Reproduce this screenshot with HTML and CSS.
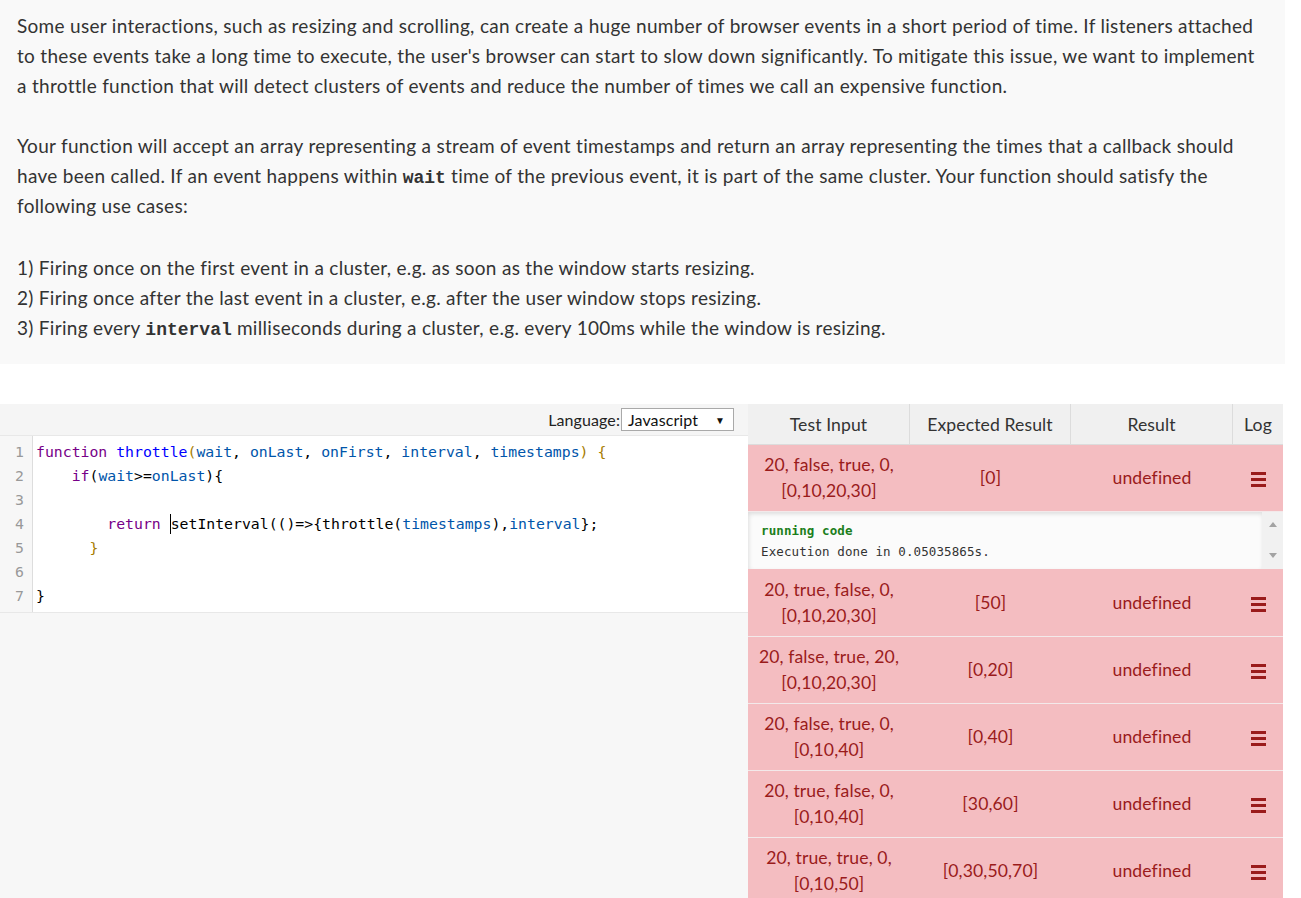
FILE: index.html
```html
<!DOCTYPE html>
<html lang="en">
<head>
<meta charset="utf-8">
<title>Throttle</title>
<link rel="stylesheet" href="styles.css">
</head>
<body>
<section class="problem">
  <p>Some user interactions, such as resizing and scrolling, can create a huge number of browser events in a short period of time. If listeners attached to these events take a long time to execute, the user's browser can start to slow down significantly. To mitigate this issue, we want to implement a throttle function that will detect clusters of events and reduce the number of times we call an expensive function.</p>
  <p>Your function will accept an array representing a stream of event timestamps and return an array representing the times that a callback should have been called. If an event happens within <code>wait</code> time of the previous event, it is part of the same cluster. Your function should satisfy the following use cases:</p>
  <p class="cases">1) Firing once on the first event in a cluster, e.g. as soon as the window starts resizing.<br>2) Firing once after the last event in a cluster, e.g. after the user window stops resizing.<br>3) Firing every <code>interval</code> milliseconds during a cluster, e.g. every 100ms while the window is resizing.</p>
</section>

<main class="workspace">
  <div class="editor-col">
    <div class="editor-bar">
      <span class="lang-label">Language:</span>
      <div class="lang-select"><span>Javascript</span><span class="arrow">▼</span></div>
    </div>
    <div class="code">
      <div class="gutter">
        <div>1</div><div>2</div><div>3</div><div>4</div><div>5</div><div>6</div><div>7</div>
      </div>
      <div class="lines">
        <div class="ln"><span class="kw">function</span> <span class="def">throttle</span><span class="br">(</span><span class="v2">wait</span>, <span class="v2">onLast</span>, <span class="v2">onFirst</span>, <span class="v2">interval</span>, <span class="v2">timestamps</span><span class="br">)</span> <span class="br">{</span></div>
        <div class="ln">    <span class="kw">if</span>(<span class="v2">wait</span>&gt;=<span class="v2">onLast</span>){</div>
        <div class="ln"> </div>
        <div class="ln">        <span class="kw">return</span> <span class="cursor"></span>setInterval(()=&gt;{throttle(<span class="v2">timestamps</span>),<span class="v2">interval</span>};</div>
        <div class="ln">      <span class="br">}</span></div>
        <div class="ln"> </div>
        <div class="ln">}</div>
      </div>
    </div>
  </div>

  <div class="results">
    <div class="thead">
      <div class="c1">Test Input</div>
      <div class="c2">Expected Result</div>
      <div class="c3">Result</div>
      <div class="c4">Log</div>
    </div>

    <div class="row">
      <div class="c1">20, false, true, 0, [0,10,20,30]</div>
      <div class="c2">[0]</div>
      <div class="c3">undefined</div>
      <div class="c4"><span class="menu"><i></i><i></i><i></i></span></div>
    </div>
    <div class="log">
      <div class="log-text">
        <div class="ok">running code</div>
        <div>Execution done in 0.05035865s.</div>
      </div>
      <div class="scroll"><span class="up"></span><span class="down"></span></div>
    </div>
    <div class="row">
      <div class="c1">20, true, false, 0, [0,10,20,30]</div>
      <div class="c2">[50]</div>
      <div class="c3">undefined</div>
      <div class="c4"><span class="menu"><i></i><i></i><i></i></span></div>
    </div>
    <div class="row">
      <div class="c1">20, false, true, 20, [0,10,20,30]</div>
      <div class="c2">[0,20]</div>
      <div class="c3">undefined</div>
      <div class="c4"><span class="menu"><i></i><i></i><i></i></span></div>
    </div>
    <div class="row">
      <div class="c1">20, false, true, 0, [0,10,40]</div>
      <div class="c2">[0,40]</div>
      <div class="c3">undefined</div>
      <div class="c4"><span class="menu"><i></i><i></i><i></i></span></div>
    </div>
    <div class="row">
      <div class="c1">20, true, false, 0, [0,10,40]</div>
      <div class="c2">[30,60]</div>
      <div class="c3">undefined</div>
      <div class="c4"><span class="menu"><i></i><i></i><i></i></span></div>
    </div>
    <div class="row">
      <div class="c1">20, true, true, 0, [0,10,50]</div>
      <div class="c2">[0,30,50,70]</div>
      <div class="c3">undefined</div>
      <div class="c4"><span class="menu"><i></i><i></i><i></i></span></div>
    </div>
  </div>
</main>
</body>
</html>
```
FILE: styles.css
```css
* { box-sizing: border-box; }

html, body {
  margin: 0;
  padding: 0;
  background: #fff;
  font-family: Lato, "Open Sans", sans-serif;
  color: #333;
}

.problem {
  width: 1285px;
  background: #f9f9f9;
  padding: 11px 17px 21px 17px;
  font-size: 19px;
  letter-spacing: 0.3px;
  line-height: 30px;
}

.problem p {
  margin: 0 0 30px 0;
}

.problem p.cases {
  margin: 32px 0 0 0;
}

.problem code {
  font-family: "Liberation Mono", "DejaVu Sans Mono", monospace;
  font-size: 18px;
  line-height: 1;
  letter-spacing: 0;
  font-weight: bold;
  color: #333;
}

.workspace {
  display: flex;
  margin-top: 40px;
  height: 494px;
  overflow: hidden;
}

.editor-col {
  width: 748px;
  background: #f7f7f7;
}

.editor-bar {
  height: 32px;
  background: #f5f5f5;
  border-bottom: 1px solid #e8e8e8;
  display: flex;
  align-items: center;
  justify-content: flex-end;
  padding-right: 14px;
  font-size: 16px;
  letter-spacing: 0.1px;
  color: #222;
}

.lang-label {
  margin-right: 1px;
}

.lang-select {
  width: 113px;
  height: 23px;
  border: 1px solid #a9a9a9;
  background: #fff;
  display: flex;
  align-items: center;
  justify-content: space-between;
  padding: 0 8px 0 6px;
  font-size: 16px;
  color: #111;
}

.lang-select .arrow {
  font-size: 10px;
  color: #111;
}

.code {
  display: flex;
  background: #fff;
  border-bottom: 1px solid #e8e8e8;
  font-family: "DejaVu Sans Mono", "Liberation Mono", monospace;
  font-size: 14.8px;
  line-height: 24px;
}

.gutter {
  width: 33px;
  background: #f7f7f7;
  border-right: 1px solid #ddd;
  color: #999;
  text-align: right;
  padding: 4px 8px 4px 0;
}

.lines {
  padding: 4px 0 4px 3px;
  color: #000;
}

.ln {
  height: 24px;
  white-space: pre;
}

.kw { color: #708; }
.def { color: #00f; }
.v2 { color: #05a; }
.br { color: #a67c00; }

.cursor {
  display: inline-block;
  width: 0;
  height: 20px;
  border-left: 1px solid #000;
  vertical-align: -5px;
}

.results {
  width: 535px;
  font-size: 17.6px;
  letter-spacing: 0.1px;
}

.thead {
  display: flex;
  height: 41px;
  background: #f0f0f0;
  border-bottom: 1px solid #dcdcdc;
  color: #333;
}

.thead > div {
  display: flex;
  align-items: center;
  justify-content: center;
  border-right: 1px solid #dcdcdc;
}

.thead > div:last-child { border-right: none; }

.c1 { width: 162px; }
.c2 { width: 161px; }
.c3 { width: 162px; }
.c4 { width: 50px; }

.row {
  display: flex;
  height: 67px;
  background: #f4bdc1;
  border-bottom: 1px solid #f3e9ea;
  color: #9a1b1b;
  line-height: 26px;
}

.row > div {
  display: flex;
  align-items: center;
  justify-content: center;
  text-align: center;
  padding: 0 6px;
}

.row > .c4 { padding: 0; }

.menu {
  display: flex;
  flex-direction: column;
  gap: 3px;
  width: 15px;
  margin-top: 2px;
}

.menu i {
  display: block;
  height: 3px;
  background: #9a1b1b;
}

.log {
  display: flex;
  height: 58px;
  background: #f4bdc1;
  padding: 0 0 1px 0;
}

.log-text {
  flex: 1;
  background: #fbfbfb;
  box-shadow: inset 1px 2px 4px rgba(0,0,0,0.12);
  padding: 8px 0 0 13px;
  font-family: "DejaVu Sans Mono", "Liberation Mono", monospace;
  font-size: 12.5px;
  line-height: 21px;
  color: #333;
}

.log-text .ok {
  color: #1c7f1c;
  font-weight: bold;
}

.scroll {
  width: 21px;
  background: #f1f1f1;
  display: flex;
  flex-direction: column;
  justify-content: space-between;
  align-items: center;
  padding: 10px 0 11px 0;
}

.scroll .up {
  width: 0;
  height: 0;
  border-left: 4px solid transparent;
  border-right: 4px solid transparent;
  border-bottom: 5px solid #a3a3a3;
}

.scroll .down {
  width: 0;
  height: 0;
  border-left: 4px solid transparent;
  border-right: 4px solid transparent;
  border-top: 5px solid #a3a3a3;
}
```
